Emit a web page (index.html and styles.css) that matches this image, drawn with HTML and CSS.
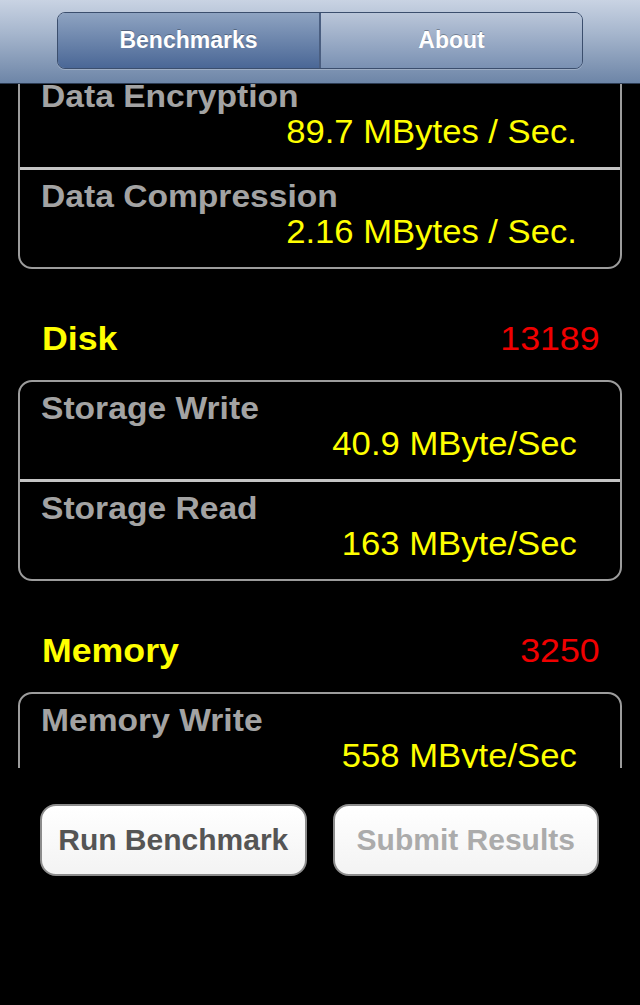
FILE: index.html
```html
<!DOCTYPE html>
<html lang="en">
<head>
    <meta charset="UTF-8">
    <meta name="viewport" content="width=device-width, initial-scale=1.0">
    <title>Benchmarks</title>
    <link rel="stylesheet" href="styles.css">
</head>
<body>
    <header class="topbar">
        <div class="segmented">
            <div class="segment selected">Benchmarks</div>
            <div class="segment">About</div>
        </div>
    </header>

    <main class="results">
        <div class="results-inner">
            <div class="card">
                <div class="row">
                    <div class="row-label"><span class="txt">Data Encryption</span></div>
                    <div class="row-value"><span class="txt">89.7 MBytes / Sec.</span></div>
                </div>
                <div class="row">
                    <div class="row-label"><span class="txt">Data Compression</span></div>
                    <div class="row-value"><span class="txt">2.16 MBytes / Sec.</span></div>
                </div>
            </div>

            <div class="section-head">
                <span class="section-name txt">Disk</span>
                <span class="section-score txt">13189</span>
            </div>
            <div class="card">
                <div class="row">
                    <div class="row-label"><span class="txt">Storage Write</span></div>
                    <div class="row-value"><span class="txt">40.9 MByte/Sec</span></div>
                </div>
                <div class="row">
                    <div class="row-label"><span class="txt">Storage Read</span></div>
                    <div class="row-value"><span class="txt">163 MByte/Sec</span></div>
                </div>
            </div>

            <div class="section-head">
                <span class="section-name txt">Memory</span>
                <span class="section-score txt">3250</span>
            </div>
            <div class="card">
                <div class="row">
                    <div class="row-label"><span class="txt">Memory Write</span></div>
                    <div class="row-value"><span class="txt">558 MByte/Sec</span></div>
                </div>
            </div>
        </div>
    </main>

    <div class="actions">
        <button class="action">Run Benchmark</button>
        <button class="action disabled">Submit Results</button>
    </div>
</body>
</html>
```

FILE: styles.css
```css
body {
    margin: 0;
    padding: 0;
    width: 640px;
    height: 1005px;
    overflow: hidden;
    background-color: #000;
    font-family: "Liberation Sans", Arial, sans-serif;
}

/* list text is drawn a little wider than the font, like the device */
.txt {
    display: inline-block;
    transform: scaleX(1.05);
}

/* top bar with segmented control */
.topbar {
    box-sizing: border-box;
    height: 84px;
    padding-top: 12px;
    display: flex;
    justify-content: center;
    background: linear-gradient(#c9d3e3, #a6b6cd 40%, #6d85a7);
    border-bottom: 1px solid #2c3b52;
}

.segmented {
    box-sizing: border-box;
    width: 526px;
    height: 57px;
    display: flex;
    border: 1px solid #3b4e6d;
    border-radius: 8px;
    overflow: hidden;
    box-shadow: 0 1px 0 rgba(255, 255, 255, 0.25);
}

.segment {
    flex: 1;
    display: flex;
    align-items: center;
    justify-content: center;
    color: #fff;
    font-size: 23px;
    font-weight: bold;
    text-shadow: 0 -1px 0 rgba(0, 0, 0, 0.3);
    background: linear-gradient(#bac6d9, #7a91b3);
}

.segment.selected {
    background: linear-gradient(#8ea3c1, #4a6796);
    border-right: 2px solid #4a5e80;
}

/* scrolling results list */
.results {
    height: 684px;
    overflow: hidden;
}

.results-inner {
    margin-top: -16px;
}

.card {
    margin: 0 18px;
    border: 2px solid #9c9c9c;
    border-radius: 14px;
}

.row {
    height: 97px;
}

.row + .row {
    border-top: 3px solid #c4c4c4;
}

.row-label {
    padding: 8px 0 0 21px;
    line-height: 36px;
    font-size: 32px;
    font-weight: bold;
    color: #a3a3a3;
}

.row-label .txt {
    transform-origin: left center;
}

.row-value {
    padding-right: 43px;
    line-height: 36px;
    font-size: 33px;
    color: #ffff00;
    text-align: right;
}

.row-value .txt {
    transform-origin: right center;
}

.section-head {
    box-sizing: border-box;
    height: 111px;
    padding: 49px 40px 0 42px;
    display: flex;
    justify-content: space-between;
    line-height: 40px;
}

.section-name {
    font-size: 34px;
    font-weight: bold;
    color: #ffff00;
    transform-origin: left center;
}

.section-score {
    font-size: 34px;
    color: #f00000;
    transform-origin: right center;
}

/* bottom buttons */
.actions {
    display: flex;
    gap: 26px;
    padding: 36px 41px 0 40px;
}

.action {
    flex: 1;
    height: 72px;
    padding: 0;
    background: linear-gradient(#fff, #f3f3f3);
    border: 2px solid #8c8c8c;
    border-radius: 16px;
    font-family: "Liberation Sans", Arial, sans-serif;
    font-size: 30px;
    font-weight: bold;
    color: #555;
}

.action.disabled {
    color: #ababab;
}
```
